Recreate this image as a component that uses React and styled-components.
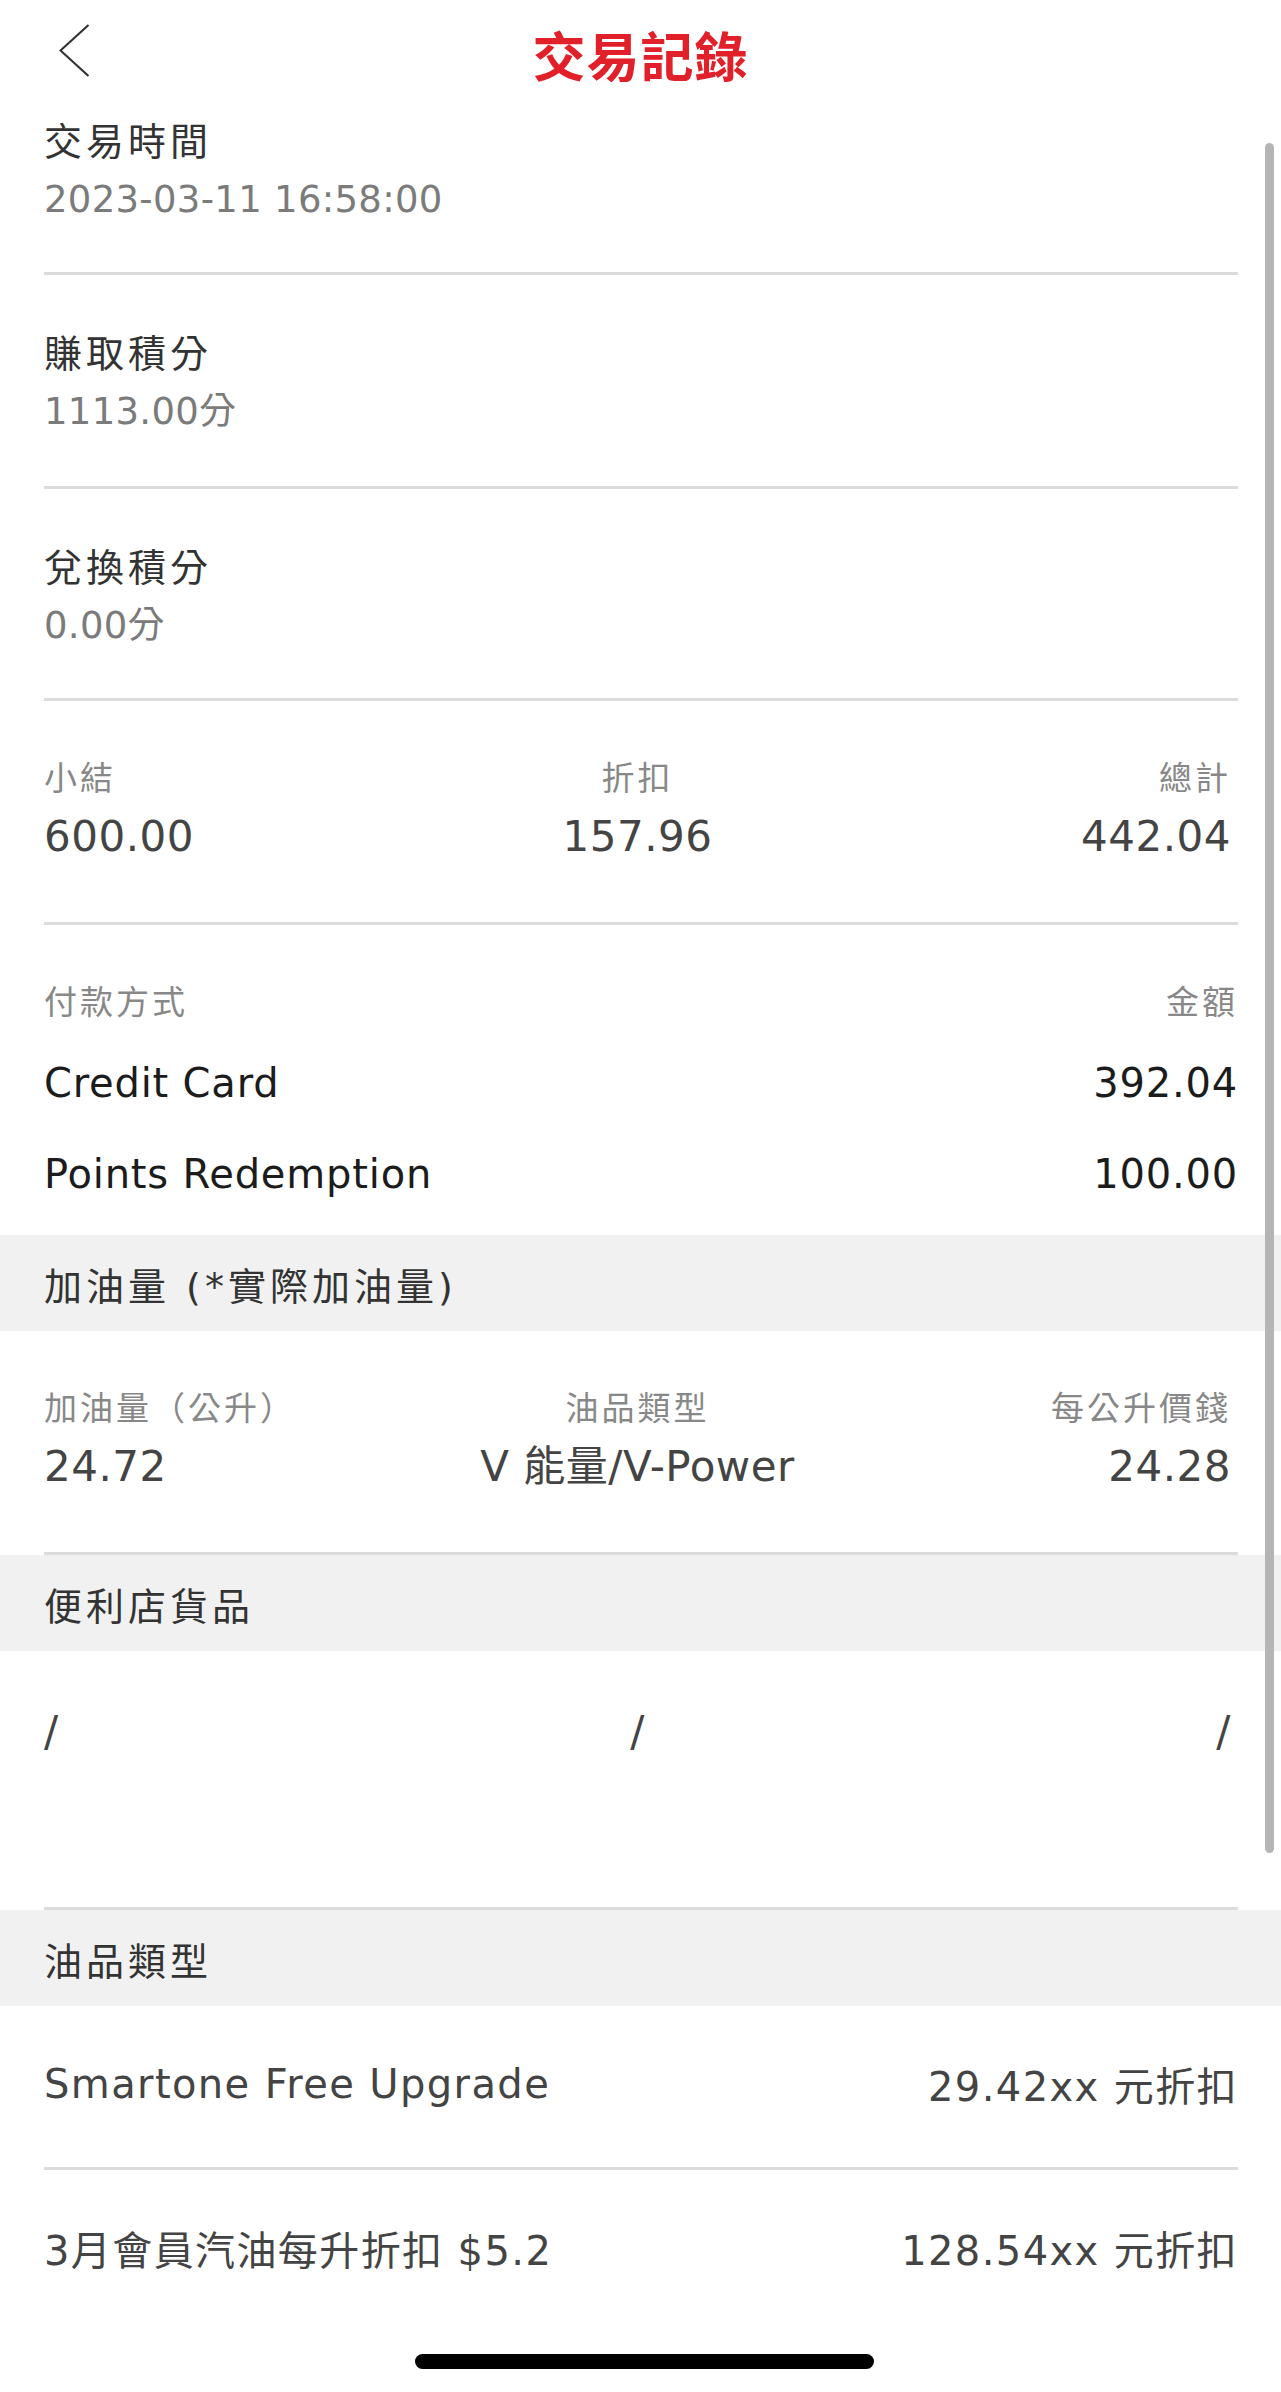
import React from "react";
//styles
import styled, { createGlobalStyle } from "styled-components";

const info = [
    { label: "交易時間", value: "2023-03-11 16:58:00", top: 10, bottom: 48 },
    { label: "賺取積分", value: "1113.00分", top: 55, bottom: 50 },
    { label: "兌換積分", value: "0.00分", top: 55, bottom: 48 },
];

const payments = [
    { name: "Credit Card", amount: "392.04" },
    { name: "Points Redemption", amount: "100.00" },
];

const discounts = [
    { name: "Smartone Free Upgrade", amount: "29.42xx 元折扣" },
    { name: "3月會員汽油每升折扣 $5.2", amount: "128.54xx 元折扣" },
];

const aligns = ["left", "center", "right"];

function ThreeCols({ labels, values, top, bottom }) {
    return (
        <Section $top={top} $bottom={bottom}>
            {labels && (
                <Grid>
                    {labels.map((l, i) => (
                        <SmallLabel key={i} $align={aligns[i]}>
                            {l}
                        </SmallLabel>
                    ))}
                </Grid>
            )}
            <Grid $gap={labels ? 12 : 0}>
                {values.map((v, i) => (
                    <Value key={i} $align={aligns[i]}>
                        {v}
                    </Value>
                ))}
            </Grid>
        </Section>
    );
}

function App() {
    return (
        <Screen>
            <GlobalStyle />
            <Header>
                <Back aria-label="back">
                    <svg width="31" height="53" viewBox="0 0 31 53">
                        <polyline
                            points="29.5,1 1.5,26.5 29.5,52"
                            fill="none"
                            stroke="#333"
                            strokeWidth="2.2"
                        />
                    </svg>
                </Back>
                <Title>交易記錄</Title>
                <span />
            </Header>

            {info.map((item) => (
                <Section key={item.label} $top={item.top} $bottom={item.bottom}>
                    <Label>{item.label}</Label>
                    <SubValue>{item.value}</SubValue>
                </Section>
            ))}

            <ThreeCols
                labels={["小結", "折扣", "總計"]}
                values={["600.00", "157.96", "442.04"]}
                top={56}
                bottom={61}
            />

            <Section $top={56} $bottom={16} $plain>
                <Row $height={44}>
                    <SmallLabel>付款方式</SmallLabel>
                    <SmallLabel>金額</SmallLabel>
                </Row>
                <PayList>
                    {payments.map((p) => (
                        <Row key={p.name} $height={91}>
                            <PayText>{p.name}</PayText>
                            <PayText>{p.amount}</PayText>
                        </Row>
                    ))}
                </PayList>
            </Section>

            <Band>加油量 (*實際加油量)</Band>
            <ThreeCols
                labels={["加油量（公升）", "油品類型", "每公升價錢"]}
                values={["24.72", "V 能量/V-Power", "24.28"]}
                top={56}
                bottom={61}
            />

            <Band>便利店貨品</Band>
            <ThreeCols values={["/", "/", "/"]} top={57} bottom={151} />

            <Band>油品類型</Band>
            {discounts.map((d, i) => (
                <Section
                    key={d.name}
                    $top={54}
                    $bottom={59}
                    $plain={i === discounts.length - 1}
                >
                    <Row $height={48}>
                        <DiscountText>{d.name}</DiscountText>
                        <DiscountText>{d.amount}</DiscountText>
                    </Row>
                </Section>
            ))}

            <ScrollThumb />
            <HomeBar />
        </Screen>
    );
}

const GlobalStyle = createGlobalStyle`
    html, body {
        margin: 0;
        padding: 0;
        background: #ffffff;
    }
    body {
        font-family: "DejaVu Sans", "Noto Sans CJK TC", sans-serif;
        -webkit-font-smoothing: antialiased;
    }
`;

const Screen = styled.div`
    position: relative;
    width: 1281px;
    min-height: 2392px;
    background: #ffffff;
    overflow: hidden;
`;

const Header = styled.header`
    height: 108px;
    display: grid;
    grid-template-columns: 140px 1fr 140px;
    align-items: center;
`;

const Back = styled.button`
    border: none;
    background: none;
    padding: 0 0 0 59px;
    margin-top: -7px;
    display: flex;
    cursor: pointer;
`;

const Title = styled.h1`
    margin: 0;
    text-align: center;
    font-family: "Noto Sans CJK TC", sans-serif;
    font-size: 53px;
    font-weight: 700;
    letter-spacing: 1px;
    color: #e1202a;
    line-height: 108px;
`;

const Section = styled.section`
    margin: 0 43px 0 44px;
    padding: ${(p) => p.$top}px 0 ${(p) => p.$bottom}px;
    border-bottom: ${(p) => (p.$plain ? "none" : "3px solid #dcdcdc")};
`;

const Label = styled.div`
    font-size: 38px;
    line-height: 48px;
    letter-spacing: 4px;
    color: #333333;
`;

const SubValue = styled.div`
    margin-top: 10px;
    font-size: 37px;
    line-height: 48px;
    letter-spacing: 0.3px;
    color: #7b7b7b;
`;

const Grid = styled.div`
    display: grid;
    grid-template-columns: 1fr 1fr 1fr;
    padding-right: 7px;
    margin-top: ${(p) => p.$gap || 0}px;
`;

const SmallLabel = styled.div`
    font-size: 33px;
    line-height: 44px;
    letter-spacing: 3px;
    color: #888888;
    text-align: ${(p) => p.$align || "left"};
    white-space: nowrap;
`;

const Value = styled.div`
    font-size: 42px;
    line-height: 48px;
    letter-spacing: 0.5px;
    color: #444444;
    text-align: ${(p) => p.$align};
    white-space: nowrap;
`;

const Row = styled.div`
    height: ${(p) => p.$height}px;
    display: flex;
    align-items: center;
    justify-content: space-between;
`;

const PayList = styled.div`
    margin-top: 12px;
`;

const PayText = styled.span`
    font-size: 40px;
    letter-spacing: 0.8px;
    color: #1c1c1c;
`;

const DiscountText = styled.span`
    font-size: 40px;
    letter-spacing: 1.4px;
    color: #444444;
`;

const Band = styled.div`
    height: 96px;
    box-sizing: border-box;
    padding: 8px 0 0 44px;
    background: #f1f1f1;
    font-size: 38px;
    line-height: 88px;
    letter-spacing: 4px;
    color: #333333;
`;

const ScrollThumb = styled.div`
    position: absolute;
    left: 1265px;
    top: 143px;
    width: 9px;
    height: 1710px;
    border-radius: 5px;
    background: #b5b5b5;
`;

const HomeBar = styled.div`
    position: absolute;
    left: 415px;
    top: 2354px;
    width: 459px;
    height: 15px;
    border-radius: 8px;
    background: #000000;
`;

export default App;
